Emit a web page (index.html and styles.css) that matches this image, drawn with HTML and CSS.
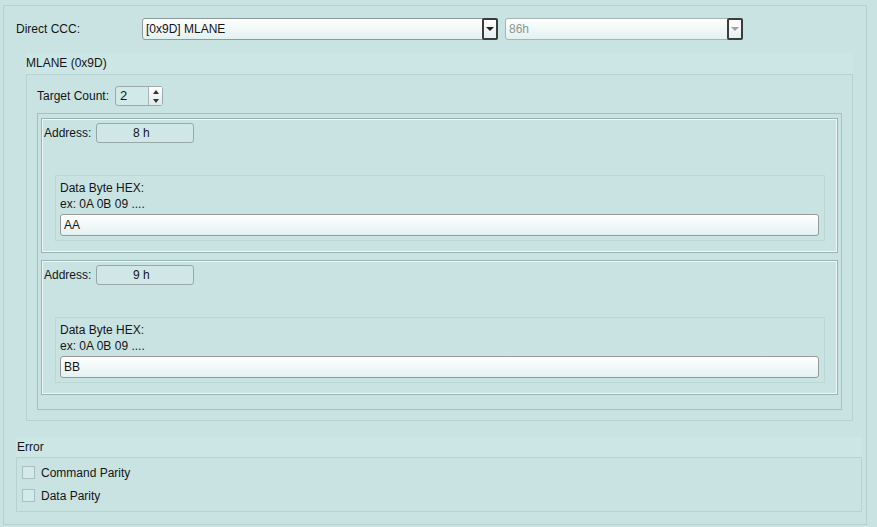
FILE: index.html
```html
<!DOCTYPE html>
<html>
  <head>
    <title>Direct CCC</title>
    <link rel="stylesheet" href="styles.css">
  </head>
  <body>
    <div class="window">
      <div class="ccc-row">
        <span class="ccc-label">Direct CCC:</span>
        <div class="combo combo-main">
          <span class="combo-text">[0x9D] MLANE</span>
          <span class="combo-btn"><span class="arrow"></span></span>
        </div>
        <div class="combo combo-addr disabled">
          <span class="combo-text">86h</span>
          <span class="combo-btn"><span class="arrow"></span></span>
        </div>
      </div>

      <div class="section mlane">
        <div class="section-title">MLANE (0x9D)</div>
        <div class="group">
          <div class="count-row">
            <span>Target Count:</span>
            <div class="spinner">
              <span class="spinner-text">2</span>
              <span class="spinner-btns">
                <span class="spin up"></span>
                <span class="spin down"></span>
              </span>
            </div>
          </div>

          <div class="target-list">
            <div class="target">
              <div class="addr-row">
                <span>Address:</span>
                <div class="addr-field">8 h</div>
              </div>
              <div class="data-box">
                <div>Data Byte HEX:</div>
                <div>ex: 0A 0B 09 ....</div>
                <div class="text-field">AA</div>
              </div>
            </div>
            <div class="target">
              <div class="addr-row">
                <span>Address:</span>
                <div class="addr-field">9 h</div>
              </div>
              <div class="data-box">
                <div>Data Byte HEX:</div>
                <div>ex: 0A 0B 09 ....</div>
                <div class="text-field">BB</div>
              </div>
            </div>
          </div>
        </div>
      </div>

      <div class="section error">
        <div class="section-title">Error</div>
        <div class="group checks">
          <label class="check"><span class="box"></span>Command Parity</label>
          <label class="check"><span class="box"></span>Data Parity</label>
        </div>
      </div>
    </div>
  </body>
</html>
```

FILE: styles.css
```css
body {
  margin: 0;
  background: #c9e3e3;
  font-family: "Liberation Sans", Arial, sans-serif;
  font-size: 12px;
  color: #151515;
}
.window {
  box-sizing: border-box;
  margin: 5px 0 0 3px;
  width: 864px;
  height: 520px;
  border: 1px solid #b3d1d1;
  padding: 12px 4px 0 12px;
}

/* top row */
.ccc-row {
  display: flex;
  align-items: center;
  height: 22px;
}
.ccc-label {
  width: 126px;
}
.combo {
  box-sizing: border-box;
  height: 22px;
  display: flex;
  align-items: center;
  border: 1px solid #8f9a9a;
  border-radius: 3px;
  background: linear-gradient(#ffffff, #e3f0f0);
}
.combo-main {
  width: 356px;
}
.combo-addr {
  width: 238px;
  margin-left: 7px;
  border-color: #a7b4b4;
}
.combo-text {
  flex: 1;
  padding-left: 3px;
}
.combo.disabled .combo-text {
  color: #8a9696;
}
.combo-btn {
  box-sizing: border-box;
  width: 16px;
  height: 22px;
  margin: -1px -1px -1px 0;
  border: 2px solid #3c3c3c;
  border-radius: 2px;
  background: linear-gradient(#ffffff, #e6eeee);
  display: flex;
  align-items: center;
  justify-content: center;
}
.arrow {
  width: 0;
  height: 0;
  border-left: 4px solid transparent;
  border-right: 4px solid transparent;
  border-top: 4px solid #222;
}
.combo.disabled .arrow {
  border-top-color: #9aa3a3;
}

/* titled sections */
.section-title {
  height: 21px;
  line-height: 21px;
  background: #cce6e6;
}
.group {
  box-sizing: border-box;
  border: 1px solid #b6d2d2;
}
.mlane {
  margin: 13px 9px 0 10px;
}
.mlane .group {
  height: 347px;
  padding: 11px 10px 0 10px;
}
.count-row {
  display: flex;
  align-items: center;
  gap: 6px;
}
.spinner {
  box-sizing: border-box;
  width: 48px;
  height: 20px;
  display: flex;
  border: 1px solid #9aa9a9;
  border-radius: 3px;
  background: #d2e9e9;
}
.spinner-text {
  flex: 1;
  padding-left: 4px;
  line-height: 18px;
  font-size: 13px;
}
.spinner-btns {
  width: 13px;
  display: flex;
  flex-direction: column;
  border-left: 1px solid #aab6b6;
  background: linear-gradient(#ffffff, #e0eaea);
}
.spin {
  flex: 1;
  display: flex;
  align-items: center;
  justify-content: center;
}
.spin::before {
  content: "";
  border-left: 3px solid transparent;
  border-right: 3px solid transparent;
}
.spin.up::before {
  border-bottom: 4px solid #333;
}
.spin.down::before {
  border-top: 4px solid #333;
}

/* list of targets */
.target-list {
  box-sizing: border-box;
  height: 297px;
  margin-top: 7px;
  border: 1px solid #a6c0c0;
  padding: 4px 3px 0 3px;
  display: flex;
  flex-direction: column;
  gap: 7px;
}
.target {
  box-sizing: border-box;
  height: 135px;
  border: 1px solid #98b3b3;
  box-shadow: inset 0 0 0 1px #eef8f8;
  padding: 4px 12px 0 2px;
}
.addr-row {
  display: flex;
  align-items: center;
  gap: 5px;
}
.addr-field {
  box-sizing: border-box;
  width: 98px;
  height: 20px;
  padding-right: 8px;
  line-height: 18px;
  text-align: center;
  border: 1px solid #98a8a8;
  border-radius: 3px;
  background: #cfe7e7;
}
.data-box {
  box-sizing: border-box;
  height: 66px;
  margin: 32px 0 0 11px;
  padding: 4px 5px 0 4px;
  border: 1px solid #bcd7d7;
  line-height: 16px;
}
.text-field {
  box-sizing: border-box;
  height: 22px;
  margin-top: 2px;
  padding-left: 3px;
  line-height: 20px;
  border: 1px solid #999;
  border-radius: 3px;
  background: linear-gradient(#ffffff, #e4f1f1);
}

/* error flags */
.error {
  margin-top: 16px;
}
.error .section-title {
  height: 20px;
  line-height: 20px;
  padding-left: 1px;
}
.checks {
  height: 55px;
  padding: 8px 0 0 5px;
}
.check {
  display: flex;
  align-items: center;
  height: 13px;
  margin-bottom: 10px;
  gap: 6px;
}
.box {
  box-sizing: border-box;
  width: 13px;
  height: 13px;
  border: 1px solid #a9bfbf;
  background: #d3eaea;
}
```
